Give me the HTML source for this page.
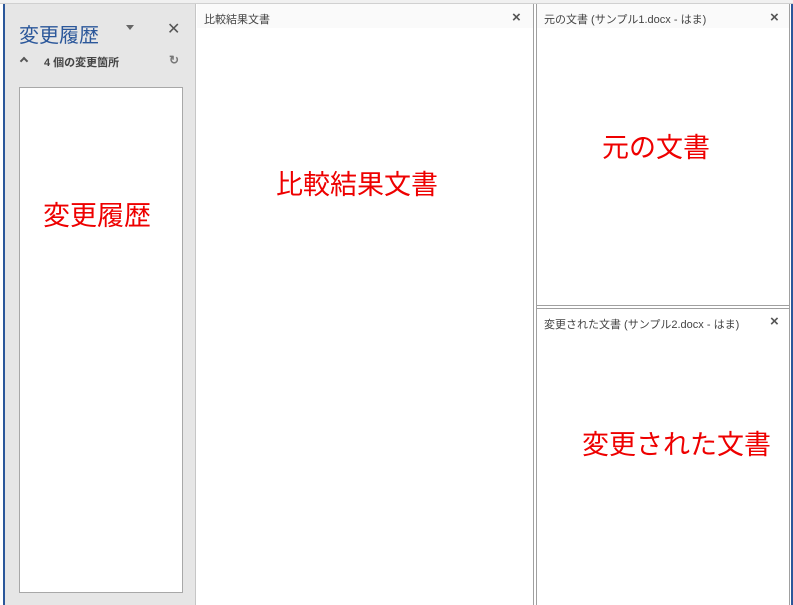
<!DOCTYPE html><html><head><meta charset="utf-8"><style>
body{margin:0;width:793px;height:605px;overflow:hidden;background:#fff;position:relative;font-family:"Liberation Sans","Noto Sans CJK JP",sans-serif}
div{position:absolute;box-sizing:border-box}
.t{font-size:11px;color:#444;white-space:nowrap}
.x{font-size:15px;color:#555;font-weight:bold}
.red{color:#e00;font-size:27px;white-space:nowrap}
</style></head><body>
<div style="left:0;top:0;width:793px;height:4px;background:#f0f0f0;border-bottom:1px solid #d0d0d0"></div>
<div style="left:3px;top:4px;width:2px;height:601px;background:#2b579a"></div>
<div style="left:5px;top:4px;width:191px;height:601px;background:#e6e6e6;border-right:1px solid #c6c6c6"></div>
<div style="left:19px;top:19px;font-size:20px;color:#2b579a">変更履歴</div>
<div style="left:126px;top:25px;width:0;height:0;border-left:4px solid transparent;border-right:4px solid transparent;border-top:5px solid #666"></div>
<div style="left:167px;top:19px;font-size:16px;color:#555">✕</div>
<div style="left:21px;top:58px;width:6px;height:6px;border-left:2px solid #555;border-top:2px solid #555;transform:rotate(45deg)"></div>
<div style="left:44px;top:54px;font-size:11px;font-weight:bold;color:#444">4 個の変更箇所</div>
<div style="left:169px;top:53px;font-size:12px;color:#777;font-weight:bold">↻</div>
<div style="left:19px;top:87px;width:164px;height:506px;background:#fff;border:1px solid #a8a8a8"></div>
<div class="red" style="left:43px;top:194px">変更履歴</div>
<div style="left:197px;top:4px;width:336px;height:24px;background:#fafafa"></div>
<div class="t" style="left:204px;top:11px">比較結果文書</div>
<div class="x" style="left:512px;top:9px">×</div>
<div class="red" style="left:276px;top:163px">比較結果文書</div>
<div style="left:533px;top:4px;width:4px;height:601px;border-left:1px solid #a0a0a0;border-right:1px solid #a0a0a0"></div>
<div style="left:537px;top:4px;width:252px;height:24px;background:#fafafa"></div>
<div class="t" style="left:544px;top:11px">元の文書 (サンプル1.docx - はま)</div>
<div class="x" style="left:770px;top:9px">×</div>
<div class="red" style="left:602px;top:126px">元の文書</div>
<div style="left:537px;top:305px;width:253px;height:4px;border-top:1px solid #a0a0a0;border-bottom:1px solid #a0a0a0"></div>
<div class="t" style="left:544px;top:316px">変更された文書 (サンプル2.docx - はま)</div>
<div class="x" style="left:770px;top:313px">×</div>
<div class="red" style="left:582px;top:423px">変更された文書</div>
<div style="left:789px;top:4px;width:1px;height:601px;background:#a0a0a0"></div>
<div style="left:791px;top:4px;width:2px;height:601px;background:#2b579a"></div>
</body></html>
